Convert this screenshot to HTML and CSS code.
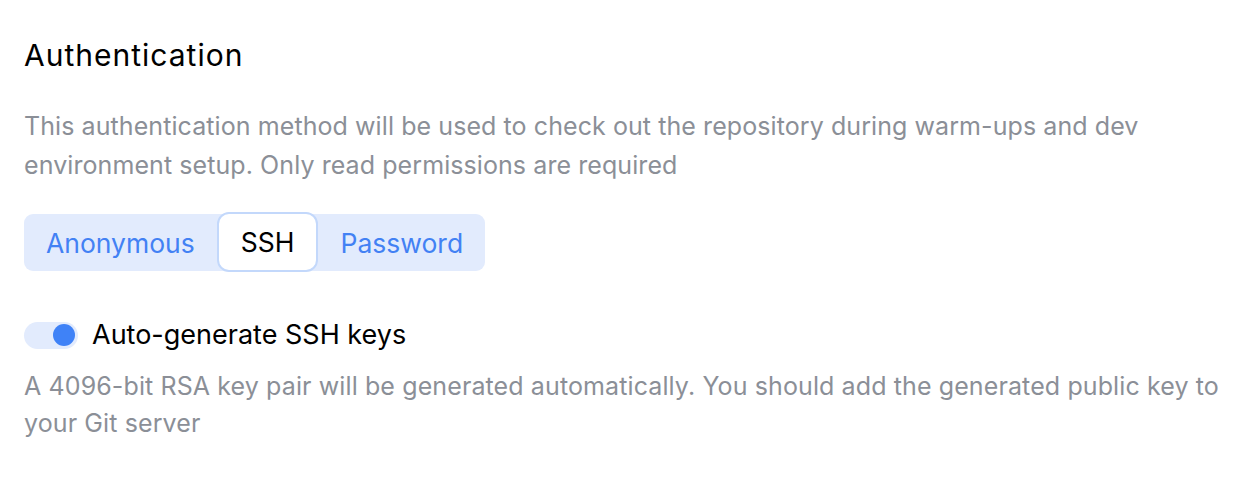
FILE: index.html
```html
<!DOCTYPE html>
<html lang="en">
<head>
  <meta charset="UTF-8" />
  <meta name="viewport" content="width=device-width, initial-scale=1.0"/>
  <title>Authentication</title>
  <link rel="stylesheet" href="styles.css">
</head>
<body>
<section class="auth">
  <h2>Authentication</h2>
  <p class="description">This authentication method will be used to check out the repository during warm-ups and dev environment setup. Only read permissions are required</p>

  <div class="segmented">
    <button class="seg-btn">Anonymous</button>
    <button class="seg-btn active">SSH</button>
    <button class="seg-btn">Password</button>
  </div>

  <label class="toggle-row">
    <span class="toggle on"><span class="knob"></span></span>
    Auto-generate SSH keys
  </label>
  <p class="hint">A 4096-bit RSA key pair will be generated automatically. You should add the generated public key to your Git server</p>
</section>
</body>
</html>
```

FILE: styles.css
```css
body {
  font-family: 'Inter', sans-serif;
  margin: 0;
  background-color: #fff;
  color: #000;
}

.auth {
  padding: 37px 24px 0 24px;
}

h2 {
  font-size: 30px;
  font-weight: 400;
  letter-spacing: 1px;
  line-height: 36px;
  margin: 0;
}

p.description {
  color: #8b8f97;
  font-size: 25px;
  letter-spacing: 0.08px;
  line-height: 39px;
  margin: 34px 0 0 0;
}

.segmented {
  display: inline-flex;
  align-items: center;
  margin-top: 29px;
  height: 57px;
  background-color: #e2ebfd;
  border-radius: 9px;
}

.seg-btn {
  font-family: 'Inter', sans-serif;
  font-size: 26.5px;
  color: #4281f4;
  background: none;
  border: 2px solid transparent;
  border-radius: 9px;
  height: 57px;
  padding: 0 20px;
  cursor: pointer;
}

.seg-btn.active {
  color: #000;
  background-color: #fff;
  border-color: #c3d8fb;
  height: 60px;
  margin-top: -1px;
  padding: 0 22px;
  border-radius: 12px;
}

.toggle-row {
  display: flex;
  align-items: center;
  gap: 14px;
  margin-top: 46px;
  font-size: 27px;
  line-height: 36px;
}

.toggle {
  display: flex;
  align-items: center;
  justify-content: flex-end;
  width: 54px;
  height: 27px;
  padding: 0 3px;
  box-sizing: border-box;
  background-color: #e2ebfd;
  border-radius: 14px;
}

.knob {
  width: 22px;
  height: 22px;
  border-radius: 50%;
  background-color: #3f82f7;
}

p.hint {
  color: #8b8f97;
  font-size: 25px;
  letter-spacing: 0.11px;
  line-height: 37px;
  margin: 15px 0 0 0;
}
```
